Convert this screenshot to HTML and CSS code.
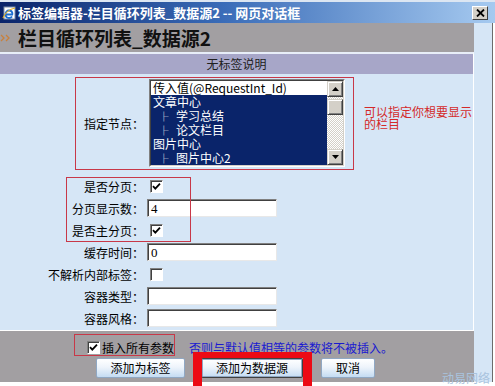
FILE: index.html
```html
<!DOCTYPE html>
<html lang="zh-CN">
<head>
    <meta charset="UTF-8">
    <title>标签编辑器-栏目循环列表_数据源2 -- 网页对话框</title>
    <link rel="stylesheet" href="styles.css">
</head>
<body>
    <div class="titlebar">
        <svg class="ie-icon" width="14" height="14" viewBox="0 0 14 14">
            <rect x="2" y="1" width="11" height="12" fill="#fff" stroke="#7a8ea8"/>
            <path d="M4 8.5h7M10.5 8.5c0-2.5-1.5-4-3.5-4s-3.5 1.7-3.5 3.8 1.5 3.7 3.6 3.7c1.2 0 2.3-.6 3-1.5" fill="none" stroke="#1d6fd0" stroke-width="1.8"/>
            <path d="M1 12c2-5 7-9 12-10" fill="none" stroke="#e8b020" stroke-width="1.2"/>
        </svg>
        <span class="title-text">标签编辑器-栏目循环列表_数据源2 -- 网页对话框</span>
        <span class="close-btn">
            <svg width="9" height="8" viewBox="0 0 9 8"><path d="M1 0.5l7 7M8 0.5l-7 7" stroke="#000" stroke-width="1.8"/></svg>
        </span>
    </div>

    <div class="window">
        <div class="dialog">
            <div class="caption">
                <svg class="caption-icon" width="11" height="8" viewBox="0 0 11 8">
                    <path d="M1 1l3 3-3 3M6 1l3 3-3 3" fill="none" stroke="#c8803c" stroke-width="1.3"/>
                </svg>
                <span>栏目循环列表_数据源2</span>
            </div>
            <div class="desc">无标签说明</div>

            <div class="form">
                <div class="node-row">
                    <label class="field-label">指定节点：</label>
                    <div class="listbox">
                        <div class="list-inner">
                            <div class="list-items">
                                <div class="item plain">传入值(@RequestInt_Id)</div>
                                <div class="item">文章中心</div>
                                <div class="item sub"><span class="branch">├</span><span>学习总结</span></div>
                                <div class="item sub"><span class="branch">├</span><span>论文栏目</span></div>
                                <div class="item">图片中心</div>
                                <div class="item sub"><span class="branch">├</span><span>图片中心2</span></div>
                            </div>
                            <div class="scrollbar">
                                <div class="sb-btn">
                                    <svg width="7" height="4" viewBox="0 0 7 4"><path d="M3.5 0L7 4H0z"/></svg>
                                </div>
                                <div class="sb-btn sb-thumb"></div>
                                <div class="sb-track"></div>
                                <div class="sb-btn">
                                    <svg width="7" height="4" viewBox="0 0 7 4"><path d="M0 0h7L3.5 4z"/></svg>
                                </div>
                            </div>
                        </div>
                    </div>
                    <div class="hint">可以指定你想要显示的栏目</div>
                </div>

                <div class="field-row">
                    <label class="field-label">是否分页：</label>
                    <span class="check checked"><svg width="9" height="9" viewBox="0 0 9 9"><path d="M1 4.2l2.3 2.4L8 1.6" fill="none" stroke="#000" stroke-width="1.8"/></svg></span>
                </div>
                <div class="field-row">
                    <label class="field-label">分页显示数：</label>
                    <span class="text-input">4</span>
                </div>
                <div class="field-row">
                    <label class="field-label">是否主分页：</label>
                    <span class="check checked"><svg width="9" height="9" viewBox="0 0 9 9"><path d="M1 4.2l2.3 2.4L8 1.6" fill="none" stroke="#000" stroke-width="1.8"/></svg></span>
                </div>
                <div class="field-row">
                    <label class="field-label">缓存时间：</label>
                    <span class="text-input">0</span>
                </div>
                <div class="field-row">
                    <label class="field-label">不解析内部标签：</label>
                    <span class="check"></span>
                </div>
                <div class="field-row">
                    <label class="field-label">容器类型：</label>
                    <span class="text-input"></span>
                </div>
                <div class="field-row">
                    <label class="field-label">容器风格：</label>
                    <span class="text-input"></span>
                </div>
            </div>

            <div class="footer">
                <div class="insert-row">
                    <span class="check checked"><svg width="9" height="9" viewBox="0 0 9 9"><path d="M1 4.2l2.3 2.4L8 1.6" fill="none" stroke="#000" stroke-width="1.8"/></svg></span>
                    <span class="insert-label">插入所有参数</span>
                    <span class="note">否则与默认值相等的参数将不被插入。</span>
                </div>
                <div class="buttons">
                    <button class="btn btn-tag">添加为标签</button>
                    <button class="btn btn-source">添加为数据源</button>
                    <button class="btn btn-cancel">取消</button>
                </div>
            </div>
        </div>
        <div class="frame-right"></div>
    </div>
    <div class="strip"></div>

    <!-- annotation boxes drawn over the dialog -->
    <div class="mark mark-node"></div>
    <div class="mark mark-paging"></div>
    <div class="mark mark-insert"></div>
    <div class="mark mark-source"></div>
    <div class="watermark">动易网络</div>
</body>
</html>
```

FILE: styles.css
```css
body {
    margin: 0;
    width: 495px;
    height: 386px;
    overflow: hidden;
    position: relative;
    background-color: #fff;
    font-family: "Noto Sans CJK SC", sans-serif;
    font-size: 12px;
    color: #000;
}

.titlebar {
    height: 21px;
    border-top: 2px solid #dce6f2;
    background: linear-gradient(to right, #0a246a, #3a6cb8 45%, #a6caf0);
    display: flex;
    align-items: center;
    padding-left: 2px;
    color: #fff;
    font-size: 13px;
    font-weight: bold;
    line-height: 15px;
}

.ie-icon {
    flex: none;
}

.title-text {
    flex: 1;
    margin-left: 2px;
    white-space: nowrap;
}

.close-btn {
    width: 16px;
    height: 14px;
    box-sizing: border-box;
    margin-right: 7px;
    background-color: #d4d0c8;
    border: 1px solid;
    border-color: #fff #404040 #404040 #fff;
    display: flex;
    align-items: center;
    justify-content: center;
}

.window {
    display: flex;
    height: 359px;
}

.dialog {
    width: 474px;
    display: flex;
    flex-direction: column;
}

.frame-right {
    flex: 1;
    background-color: #d6e6f6;
    border-right: 1px solid #6c6c6c;
    margin-right: 2px;
}

.caption {
    height: 29px;
    background-color: #a29fa2;
    display: flex;
    align-items: center;
    font-size: 19px;
    font-weight: bold;
    color: #111;
}

.caption-icon {
    margin-right: 7px;
}

.desc {
    height: 20px;
    border-top: 2px solid #e8eef8;
    border-right: 1px solid #fff;
    background-color: #a7a6c8;
    text-align: center;
    line-height: 20px;
    color: #202020;
}

.form {
    height: 257px;
    box-sizing: border-box;
    padding-top: 5px;
    background-color: #d6e6f6;
    border-right: 1px solid #fff;
    border-bottom: 1px solid #fff;
}

.field-label {
    text-align: right;
    white-space: nowrap;
}

.node-row {
    display: grid;
    grid-template-columns: 144px 196px auto;
    column-gap: 5px;
    align-items: center;
    height: 88px;
    margin-bottom: 8px;
}

.listbox {
    height: 88px;
    box-sizing: border-box;
    border: 1px solid;
    border-color: #808080 #fff #fff #808080;
}

.list-inner {
    height: 100%;
    box-sizing: border-box;
    border: 1px solid;
    border-color: #404040 #d4d0c8 #d4d0c8 #404040;
    display: flex;
    background-color: #0a246a;
}

.list-items {
    flex: 1;
    min-width: 0;
}

.item {
    height: 14px;
    line-height: 14px;
    padding-left: 2px;
    white-space: nowrap;
    color: #fff;
}

.item.plain {
    background-color: #fff;
    color: #000;
}

.item.sub {
    display: flex;
    align-items: center;
    padding-left: 8px;
}

.branch {
    width: 17px;
    font-size: 9.5px;
    line-height: 14px;
}

.scrollbar {
    width: 16px;
    display: flex;
    flex-direction: column;
    background: repeating-conic-gradient(#d4d0c8 0 25%, #fff 0 50%) 0 0 / 2px 2px;
}

.sb-btn {
    height: 16px;
    flex: none;
    box-sizing: border-box;
    background-color: #d4d0c8;
    border: 1px solid;
    border-color: #d4d0c8 #404040 #404040 #d4d0c8;
    box-shadow: inset 1px 1px 0 #fff, inset -1px -1px 0 #808080;
    display: flex;
    align-items: center;
    justify-content: center;
}

.sb-thumb {
    margin-top: 2px;
}

.sb-track {
    flex: 1;
}

.hint {
    align-self: start;
    margin-top: 27px;
    margin-left: 14px;
    width: 110px;
    line-height: 12px;
    color: #d42a2a;
}

.field-row {
    display: grid;
    grid-template-columns: 144px auto;
    column-gap: 3px;
    align-items: center;
    height: 22px;
}

.text-input {
    width: 130px;
    height: 18px;
    box-sizing: border-box;
    border: 1px solid;
    border-color: #808080 #e8e8e8 #e8e8e8 #808080;
    box-shadow: inset 1px 1px 0 #404040;
    background-color: #fff;
    padding-left: 3px;
    font-family: "Liberation Serif", serif;
    font-size: 13px;
    line-height: 17px;
}

.check {
    width: 13px;
    height: 13px;
    box-sizing: border-box;
    margin-left: 3px;
    border: 1px solid;
    border-color: #808080 #fff #fff #808080;
    box-shadow: inset 1px 1px 0 #404040;
    background-color: #fff;
    display: flex;
    align-items: center;
    justify-content: center;
}

.footer {
    flex: 1;
    background-color: #a29fa2;
    padding-top: 8px;
}

.insert-row {
    display: flex;
    align-items: center;
    height: 16px;
    padding-left: 84px;
}

.insert-label {
    margin-left: 2px;
}

.note {
    margin-left: 15px;
    color: #1a1ad0;
    white-space: nowrap;
}

.buttons {
    display: flex;
    height: 20px;
    margin-top: 3px;
    padding-left: 96px;
}

.btn {
    height: 20px;
    box-sizing: border-box;
    padding: 0;
    border: 1px solid #90a8c4;
    border-radius: 2px;
    background: linear-gradient(#ffffff, #eef4fb 45%, #c4dbf2);
    font-family: "Noto Sans CJK SC", sans-serif;
    font-size: 12px;
    line-height: 18px;
    color: #000;
}

.btn-tag {
    width: 89px;
}

.btn-source {
    width: 102px;
    margin-left: 16px;
    border-color: #404040;
    box-shadow: inset 0 0 0 1px #90a8c4;
}

.btn-cancel {
    width: 54px;
    margin-left: 18px;
}

.strip {
    height: 4px;
    background-color: #fff;
}

.mark {
    position: absolute;
    box-sizing: border-box;
    border: 1px solid #c83848;
}

.mark-node {
    left: 75px;
    top: 77px;
    width: 279px;
    height: 93px;
}

.mark-paging {
    left: 66px;
    top: 177px;
    width: 125px;
    height: 65px;
}

.mark-insert {
    left: 74px;
    top: 334px;
    width: 101px;
    height: 22px;
}

.mark-source {
    left: 193px;
    top: 352px;
    width: 119px;
    height: 40px;
    border: 6px solid #ec0a14;
    border-left-width: 9px;
    border-right-width: 9px;
}

.watermark {
    position: absolute;
    left: 442px;
    top: 371px;
    color: #a9c3de;
    font-size: 12px;
    line-height: 14px;
}
```
